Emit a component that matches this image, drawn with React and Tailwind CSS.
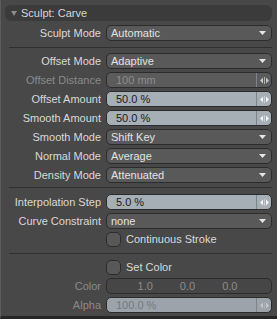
const labelCls = "w-[100px] shrink-0 text-right whitespace-nowrap";

function Spinner({ dim }) {
  return (
    <div className={`flex h-full w-[15px] items-center justify-center border-l ${dim ? "border-[#7d848b]" : "border-[#7b838b]"}`}>
      <svg width="9" height="7" viewBox="0 0 9 7">
        <path d="M3 0.5 L0 3.5 L3 6.5 Z" fill={dim ? "#c2c7cc" : "#f2f4f6"} />
        <path d="M6 0.5 L9 3.5 L6 6.5 Z" fill={dim ? "#c2c7cc" : "#f2f4f6"} />
        <rect x="4" y="0" width="1" height="7" fill={dim ? "#a9afb5" : "#c8cdd2"} />
      </svg>
    </div>
  );
}

function Row({ label, dim, children }) {
  return (
    <div className="flex h-[16px] items-center">
      <div className={`${labelCls} ${dim ? "text-[#8a8a8a]" : "text-[#d9d9d9]"}`}>{label}</div>
      <div className="ml-[5px] h-full w-[166px]">{children}</div>
    </div>
  );
}

function Dropdown({ value }) {
  return (
    <div className="flex h-full items-center justify-between rounded-[5px] border border-[#2c2c2c] bg-[#595959] pl-[4px] pr-[5px] text-[#e2e2e2]">
      <span>{value}</span>
      <svg width="7" height="4" viewBox="0 0 7 4">
        <path d="M0 0 L7 0 L3.5 4 Z" fill="#e6e6e6" />
      </svg>
    </div>
  );
}

function NumField({ value, disabled, faded }) {
  const bg = disabled ? "bg-[#5b5b5b]" : faded ? "bg-[#9ca3aa]" : "bg-[#a6aeb6]";
  const txt = disabled ? "text-[#8c8c8c]" : faded ? "text-[#747a80]" : "text-[#1b1b1b]";
  return (
    <div className={`flex h-full items-center overflow-hidden rounded-[5px] border border-[#2c2c2c] ${bg} ${txt}`}>
      <span className="flex-1 pl-[9px]">{value}</span>
      <Spinner dim={disabled || faded} />
    </div>
  );
}

function Check({ label, tall }) {
  return (
    <div className={`flex items-center ${tall ? "h-[16px]" : "h-[15px]"}`}>
      <div className="w-[105px] shrink-0" />
      <div className="h-[15px] w-[15px] rounded-[5px] border border-[#2c2c2c] bg-[#585858]" />
      <span className="ml-[5px] text-[#d9d9d9]">{label}</span>
    </div>
  );
}

function Sep({ className }) {
  return <div className={`ml-[8px] h-px w-[263px] bg-[#303030] ${className}`} />;
}

export default function App() {
  return (
    <div
      className="h-[319px] w-[277px] overflow-hidden border-b-[3px] border-l border-b-[#262626] border-l-[#5c5c5c] bg-[#484848] text-[11px] leading-none"
      style={{ fontFamily: '"Liberation Sans", Arial, sans-serif' }}>
      <div className="mt-[5px] mr-[5px] ml-[4px] flex h-[16px] items-center rounded-[6px] bg-[#3b3b3b] text-[#d6d6d6]">
        <svg className="ml-[6px]" width="6" height="5" viewBox="0 0 6 5">
          <path d="M0 0 L6 0 L3 5 Z" fill="#8a8a8a" />
        </svg>
        <span className="ml-[4px]">Sculpt: Carve</span>
      </div>

      <div className="mt-[4px] flex flex-col gap-[3px]">
        <Row label="Sculpt Mode">
          <Dropdown value="Automatic" />
        </Row>
        <Sep className="mt-[3px] mb-[2px]" />
        <Row label="Offset Mode">
          <Dropdown value="Adaptive" />
        </Row>
        <Row label="Offset Distance" dim>
          <NumField value="100 mm" disabled />
        </Row>
        <Row label="Offset Amount">
          <NumField value="50.0 %" />
        </Row>
        <Row label="Smooth Amount">
          <NumField value="50.0 %" />
        </Row>
        <Row label="Smooth Mode">
          <Dropdown value="Shift Key" />
        </Row>
        <Row label="Normal Mode">
          <Dropdown value="Average" />
        </Row>
        <Row label="Density Mode">
          <Dropdown value="Attenuated" />
        </Row>
        <Sep className="mt-[1px] mb-[3px]" />
        <Row label="Interpolation Step">
          <NumField value="5.0 %" />
        </Row>
        <Row label="Curve Constraint">
          <Dropdown value="none" />
        </Row>
        <Check label="Continuous Stroke" />
        <Sep className="mt-[3px] mb-[2px]" />
        <Check label="Set Color" tall />
        <Row label="Color" dim>
          <div className="flex h-full items-center justify-center gap-[27px] rounded-[5px] border border-[#2c2c2c] bg-[#464646] text-[#8c8c8c]">
            <span className="ml-[-3px]">1.0</span>
            <span>0.0</span>
            <span>0.0</span>
          </div>
        </Row>
        <Row label="Alpha" dim>
          <NumField value="100.0 %" faded />
        </Row>
      </div>
    </div>
  );
}
